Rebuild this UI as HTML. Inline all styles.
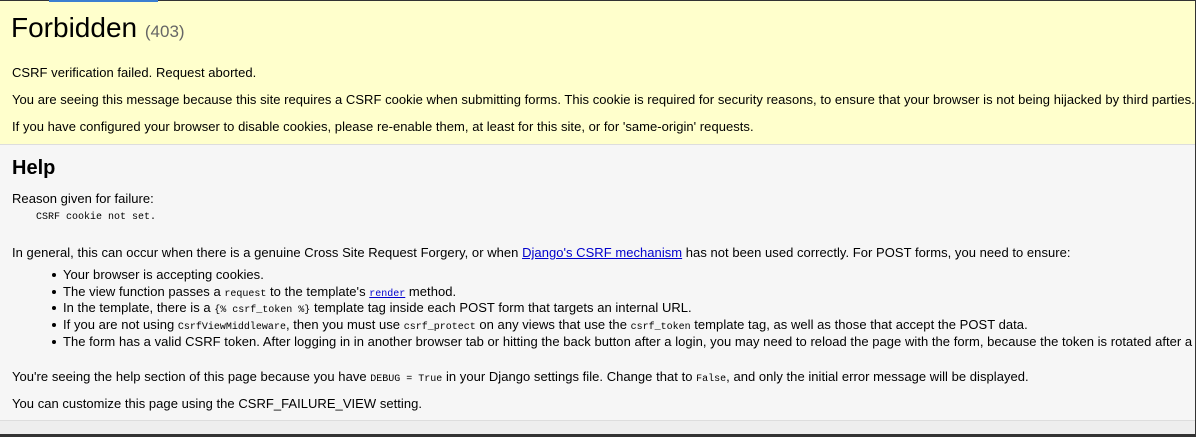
<!DOCTYPE html>
<html><head><style>
html,body{margin:0;padding:0;}
body{width:1196px;height:436px;overflow:hidden;background:#eee;font-family:"Liberation Sans",sans-serif;font-size:13px;color:#000;position:relative;}
.frame{position:absolute;left:0;top:0;width:1195px;height:433px;border-top:1px solid #333;border-right:1px solid #333;border-bottom:3px solid #333;box-sizing:content-box;}
.blue{position:absolute;left:49px;top:0;width:109px;height:2px;background:#3b7fd1;}
.sum{position:absolute;left:0;top:1px;width:1195px;height:143px;background:#ffc;border-bottom:1px solid #ddd;}
.help{position:absolute;left:0;top:145px;width:1195px;height:275px;background:#f6f6f6;border-bottom:1px solid #ddd;}
.t{position:absolute;left:12px;white-space:nowrap;line-height:16px;letter-spacing:0.035px;}
h1{position:absolute;left:11px;top:11px;margin:0;font-weight:normal;font-size:28px;white-space:nowrap;}
h1 span{font-size:17px;color:#666;}
h2{position:absolute;left:12px;top:12px;margin:0;font-size:20px;}
code,pre{font-family:"Liberation Mono",monospace;font-size:10px;letter-spacing:0;}
a{color:#00c;}
li{position:absolute;left:63px;white-space:nowrap;line-height:16px;letter-spacing:0.035px;}
li:before{content:"";position:absolute;left:-11px;top:6px;width:4px;height:4px;border-radius:50%;background:#000;}
</style></head><body>
<div class="sum">
<h1>Forbidden <span>(403)</span></h1>
<div class="t" style="top:64px">CSRF verification failed. Request aborted.</div>
<div class="t" style="top:91px">You are seeing this message because this site requires a CSRF cookie when submitting forms. This cookie is required for security reasons, to ensure that your browser is not being hijacked by third parties.</div>
<div class="t" style="top:118px">If you have configured your browser to disable cookies, please re-enable them, at least for this site, or for 'same-origin' requests.</div>
</div>
<div class="help">
<h2>Help</h2>
<div class="t" style="top:46px">Reason given for failure:</div>
<div class="t" style="top:62px;left:36px"><code>CSRF cookie not set.</code></div>
<div class="t" style="top:100px">In general, this can occur when there is a genuine Cross Site Request Forgery, or when <a href="#">Django's CSRF mechanism</a> has not been used correctly. For POST forms, you need to ensure:</div>
<ul style="margin:0;padding:0;list-style:none">
<li style="top:122px">Your browser is accepting cookies.</li>
<li style="top:139px">The view function passes a <code>request</code> to the template's <a href="#"><code>render</code></a> method.</li>
<li style="top:155px">In the template, there is a <code>{% csrf_token %}</code> template tag inside each POST form that targets an internal URL.</li>
<li style="top:172px">If you are not using <code>CsrfViewMiddleware</code>, then you must use <code>csrf_protect</code> on any views that use the <code>csrf_token</code> template tag, as well as those that accept the POST data.</li>
<li style="top:189px">The form has a valid CSRF token. After logging in in another browser tab or hitting the back button after a login, you may need to reload the page with the form, because the token is rotated after a login.</li>
</ul>
<div class="t" style="top:224px">You're seeing the help section of this page because you have <code>DEBUG = True</code> in your Django settings file. Change that to <code>False</code>, and only the initial error message will be displayed.</div>
<div class="t" style="top:251px">You can customize this page using the CSRF_FAILURE_VIEW setting.</div>
</div>
<div class="frame"></div>
<div class="blue"></div>
</body></html>
